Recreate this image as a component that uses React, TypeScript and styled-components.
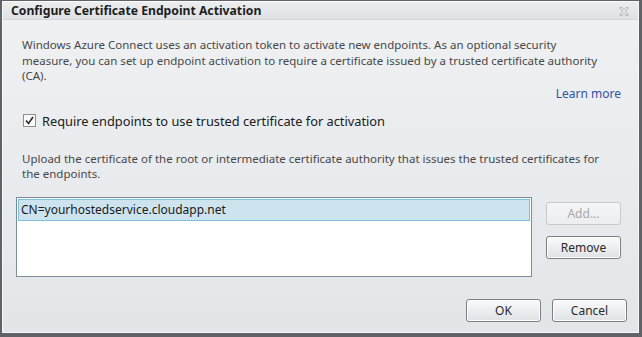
import React from 'react';
import styled, { createGlobalStyle } from 'styled-components';

const GlobalStyle = createGlobalStyle`
  html, body {
    margin: 0;
    padding: 0;
    background: #5b5f64;
  }
  * { box-sizing: border-box; }
`;

const Frame = styled.div`
  width: 642px;
  height: 337px;
  background: #5f6367;
  padding: 1px 5px 4px 2px;
  display: flex;
`;

const Dialog = styled.div`
  flex: 1;
  display: flex;
  flex-direction: column;
  border: 1px solid #f7f8f9;
  border-top-color: #fafbfc;
  background: linear-gradient(#eff1f3, #e3e6e9);
  font-family: "Noto Sans", "Open Sans", sans-serif;
  font-size: 11.5px;
  color: #4a4a4a;
`;

const TitleBar = styled.div`
  height: 18px;
  display: flex;
  align-items: center;
  justify-content: space-between;
  padding: 0 9px 0 8px;
  background: linear-gradient(#ebedef, #dfe3e6);
  border-bottom: 1px solid #d3d7db;
`;

const Title = styled.div`
  font-weight: bold;
  font-size: 12.2px;
  color: #1e1e1e;
`;

const CloseIcon = styled.svg`
  width: 10px;
  height: 9px;
  margin-top: 2px;
`;

const Body = styled.div`
  flex: 1;
  display: flex;
  flex-direction: column;
  padding: 17px 17px 0 19px;
`;

const Paragraph = styled.p`
  margin: 0;
  line-height: 15.5px;
  color: #484848;
`;

const LinkRow = styled.div`
  display: flex;
  justify-content: flex-end;
  margin-top: 2px;
`;

const Link = styled.a`
  color: #3451a3;
  text-decoration: none;
  line-height: 15px;
  font-size: 12px;
`;

const CheckRow = styled.label`
  display: flex;
  align-items: center;
  gap: 6px;
  margin-top: 11px;
  margin-left: 1px;
  font-size: 12.8px;
  color: #202020;
`;

const Box = styled.span`
  width: 13px;
  height: 13px;
  border: 1px solid #8e8f8f;
  background: linear-gradient(#f4f4f4, #ffffff);
  display: flex;
  align-items: center;
  justify-content: center;
`;

const UploadText = styled(Paragraph)`
  margin-top: 21px;
`;

const ListArea = styled.div`
  display: flex;
  gap: 14px;
  margin-top: 15px;
  margin-left: -6px;
`;

const ListBox = styled.div`
  width: 516px;
  height: 80px;
  background: #ffffff;
  border: 1px solid #7f8c99;
  padding: 1px;
`;

const ListItem = styled.div<{ $selected?: boolean }>`
  height: 22px;
  display: flex;
  align-items: center;
  padding-left: 2px;
  font-size: 12px;
  color: #1a1a1a;
  background: ${(p) => (p.$selected ? '#cde4ef' : 'transparent')};
  border: 1px solid ${(p) => (p.$selected ? '#7cc4dd' : 'transparent')};
`;

const SideButtons = styled.div`
  display: flex;
  flex-direction: column;
  gap: 11px;
  padding-top: 5px;
`;

const Button = styled.button`
  width: 75px;
  height: 23px;
  padding: 0;
  font-family: inherit;
  font-size: 12px;
  color: #2a2a2a;
  border: 1px solid #7a7f85;
  border-radius: 3px;
  background: linear-gradient(#fbfbfb 0%, #eceef0 50%, #dfe2e5 100%);
  box-shadow: inset 0 0 0 1px #ffffff;
  &:disabled {
    color: #a8a8a8;
    border-color: #c6cacd;
    background: linear-gradient(#f4f5f6, #eceef0);
    box-shadow: none;
  }
`;

const Footer = styled.div`
  margin-top: auto;
  display: flex;
  justify-content: flex-end;
  gap: 11px;
  padding-bottom: 10px;
  margin-right: -6px;
`;

export default function App() {
  return (
    <>
      <GlobalStyle />
      <Frame>
        <Dialog>
          <TitleBar>
            <Title>Configure Certificate Endpoint Activation</Title>
            <CloseIcon viewBox="0 0 10 9">
              <path
                d="M1 0.5 L3 0.5 L5 2.5 L7 0.5 L9 0.5 L9 1.5 L6.5 4.5 L9 7.5 L9 8.5 L7 8.5 L5 6.5 L3 8.5 L1 8.5 L1 7.5 L3.5 4.5 L1 1.5 Z"
                fill="none"
                stroke="#a7abaf"
                strokeWidth="0.9"
              />
            </CloseIcon>
          </TitleBar>
          <Body>
            <Paragraph>
              Windows Azure Connect uses an activation token to activate new endpoints. As an optional security
              <br />
              measure, you can set up endpoint activation to require a certificate issued by a trusted certificate authority
              <br />
              (CA).
            </Paragraph>
            <LinkRow>
              <Link href="#">Learn more</Link>
            </LinkRow>
            <CheckRow>
              <Box>
                <svg width="9" height="9" viewBox="0 0 9 9">
                  <path d="M1 4.5 L3.5 7.5 L8 1" fill="none" stroke="#2b2b2b" strokeWidth="1.6" />
                </svg>
              </Box>
              Require endpoints to use trusted certificate for activation
            </CheckRow>
            <UploadText>
              Upload the certificate of the root or intermediate certificate authority that issues the trusted certificates for
              <br />
              the endpoints.
            </UploadText>
            <ListArea>
              <ListBox>
                <ListItem $selected>CN=yourhostedservice.cloudapp.net</ListItem>
              </ListBox>
              <SideButtons>
                <Button disabled>Add...</Button>
                <Button>Remove</Button>
              </SideButtons>
            </ListArea>
            <Footer>
              <Button>OK</Button>
              <Button>Cancel</Button>
            </Footer>
          </Body>
        </Dialog>
      </Frame>
    </>
  );
}
